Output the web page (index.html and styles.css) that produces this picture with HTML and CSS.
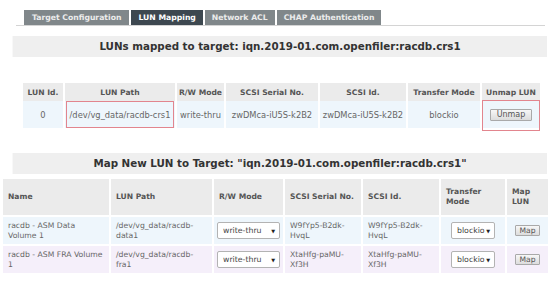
FILE: index.html
```html
<!DOCTYPE html>
<html lang="en">
<head>
    <meta charset="UTF-8">
    <title>Openfiler - LUN Mapping</title>
    <link rel="stylesheet" href="styles.css">
</head>
<body>

    <div class="tabs">
        <a href="#" class="tab">Target Configuration</a>
        <a href="#" class="tab active">LUN Mapping</a>
        <a href="#" class="tab">Network ACL</a>
        <a href="#" class="tab">CHAP Authentication</a>
    </div>

    <h3 class="section-title first">LUNs mapped to target: iqn.2019-01.com.openfiler:racdb.crs1</h3>

    <table class="mapped">
        <colgroup>
            <col class="c-id"><col class="c-path"><col class="c-mode"><col class="c-serial">
            <col class="c-scsi"><col class="c-transfer"><col class="c-unmap">
        </colgroup>
        <tr>
            <th>LUN Id.</th>
            <th>LUN Path</th>
            <th>R/W Mode</th>
            <th>SCSI Serial No.</th>
            <th>SCSI Id.</th>
            <th>Transfer Mode</th>
            <th>Unmap LUN</th>
        </tr>
        <tr class="row-blue">
            <td>0</td>
            <td class="marked">/dev/vg_data/racdb-crs1</td>
            <td>write-thru</td>
            <td>zwDMca-iU5S-k2B2</td>
            <td>zwDMca-iU5S-k2B2</td>
            <td>blockio</td>
            <td class="marked tall"><button class="btn unmap">Unmap</button></td>
        </tr>
    </table>

    <h3 class="section-title second">Map New LUN to Target: "iqn.2019-01.com.openfiler:racdb.crs1"</h3>

    <table class="newmap">
        <colgroup>
            <col class="n-name"><col class="n-path"><col class="n-mode"><col class="n-serial">
            <col class="n-scsi"><col class="n-transfer"><col class="n-map">
        </colgroup>
        <tr>
            <th>Name</th>
            <th>LUN Path</th>
            <th>R/W Mode</th>
            <th>SCSI Serial No.</th>
            <th>SCSI Id.</th>
            <th>Transfer Mode</th>
            <th>Map LUN</th>
        </tr>
        <tr class="row-blue">
            <td>racdb - ASM Data Volume 1</td>
            <td>/dev/vg_data/racdb-data1</td>
            <td class="center">
                <span class="select-wrap wide"><select><option>write-thru</option><option>write-back</option></select></span>
            </td>
            <td>W9fYp5-B2dk-HvqL</td>
            <td>W9fYp5-B2dk-HvqL</td>
            <td class="center">
                <span class="select-wrap"><select><option>blockio</option><option>fileio</option></select></span>
            </td>
            <td class="center"><button class="btn">Map</button></td>
        </tr>
        <tr class="row-pink">
            <td>racdb - ASM FRA Volume 1</td>
            <td>/dev/vg_data/racdb-fra1</td>
            <td class="center">
                <span class="select-wrap wide"><select><option>write-thru</option><option>write-back</option></select></span>
            </td>
            <td>XtaHfg-paMU-Xf3H</td>
            <td>XtaHfg-paMU-Xf3H</td>
            <td class="center">
                <span class="select-wrap"><select><option>blockio</option><option>fileio</option></select></span>
            </td>
            <td class="center"><button class="btn">Map</button></td>
        </tr>
    </table>

</body>
</html>
```

FILE: styles.css
```css
body {
    margin: 0;
    background-color: #fff;
    font-family: "DejaVu Sans", Verdana, sans-serif;
    font-size: 8px;
    color: #666;
}

/* tab strip */
.tabs {
    display: flex;
    gap: 2px;
    margin: 10px 8px 0 16px;
    padding-left: 8px;
    border-bottom: 1px solid #d4d4d4;
}

.tab {
    display: block;
    height: 15px;
    line-height: 15px;
    padding: 0 7px;
    background-color: #80878a;
    color: #ececec;
    font-size: 7.7px;
    font-weight: bold;
    text-decoration: none;
}

.tab:first-child {
    padding: 0 8px;
}

.tab.active {
    background-color: #3d4850;
    color: #fff;
}

/* grey title bars */
.section-title {
    margin: 0 6px 0 12px;
    height: 21px;
    line-height: 21px;
    background-color: #efefef;
    border-left: 1px solid #f8f8f8;
    color: #333;
    font-size: 10.3px;
    text-align: center;
}

.section-title.first {
    margin-top: 10px;
}

.section-title.second {
    margin-top: 25px;
}

table {
    table-layout: fixed;
    border-collapse: separate;
    border-spacing: 2px 0;
}

th {
    background-color: #ebebeb;
    color: #555;
    font-size: 7.6px;
    font-weight: bold;
}

/* mapped luns */
.mapped {
    width: 517px;
    margin: 26px 0 0 21px;
}

.mapped th {
    height: 18px;
    padding: 0;
    text-align: center;
    white-space: nowrap;
}

.mapped td {
    height: 27px;
    padding: 0;
    text-align: center;
    font-size: 8.3px;
    white-space: nowrap;
}

.c-id { width: 40px; }
.c-path { width: 110px; }
.c-mode { width: 47px; }
.c-serial { width: 92px; }
.c-scsi { width: 86px; }
.c-transfer { width: 72px; }
.c-unmap { width: 58px; }

.row-blue td {
    background-color: #eef6fc;
}

.row-pink td {
    background-color: #f5effa;
}

/* red annotation boxes */
.marked {
    position: relative;
}

.marked::after {
    content: "";
    position: absolute;
    top: 0;
    right: 1px;
    bottom: 0;
    left: 1px;
    border: 1px solid #e2858e;
    pointer-events: none;
}

.marked.tall::after {
    top: -1px;
    right: 0;
    bottom: -3px;
    left: 0;
}

/* new lun form */
.newmap {
    width: 547px;
    margin: 3px 0 0 1px;
    border-spacing: 2px;
}

.newmap th {
    height: 36px;
    padding: 0 5px;
    text-align: left;
    line-height: 10px;
}

.newmap td {
    height: 27px;
    padding: 0 5px;
    font-size: 7.7px;
    line-height: 10px;
}

.n-name { width: 106px; }
.n-path { width: 101px; }
.n-mode { width: 69px; }
.n-serial { width: 76px; }
.n-scsi { width: 76px; }
.n-transfer { width: 64px; }
.n-map { width: 41px; }

.newmap .center {
    padding: 0;
    text-align: center;
}

.select-wrap {
    position: relative;
    display: inline-block;
    vertical-align: middle;
}

.select-wrap::after {
    content: "\25BC";
    position: absolute;
    right: 5px;
    top: 4px;
    font-size: 5px;
    color: #222;
    pointer-events: none;
}

.select-wrap select {
    appearance: none;
    -webkit-appearance: none;
    display: block;
    width: 44px;
    height: 17px;
    padding: 0 0 0 5px;
    border: 1px solid #b3b3b3;
    border-radius: 2px;
    background-color: #fff;
    color: #444;
    font-family: inherit;
    font-size: 7.8px;
}

.select-wrap.wide select {
    width: 63px;
}

.btn {
    padding: 0 3px;
    height: 11px;
    line-height: 9px;
    border: 1px solid #a9a9a9;
    border-radius: 1px;
    background: linear-gradient(#f7f7f7, #dcdcdc);
    color: #555;
    font-family: inherit;
    font-size: 7.6px;
    vertical-align: middle;
}

.btn.unmap {
    padding: 0 6px;
    height: 12px;
    font-size: 8px;
}
```
